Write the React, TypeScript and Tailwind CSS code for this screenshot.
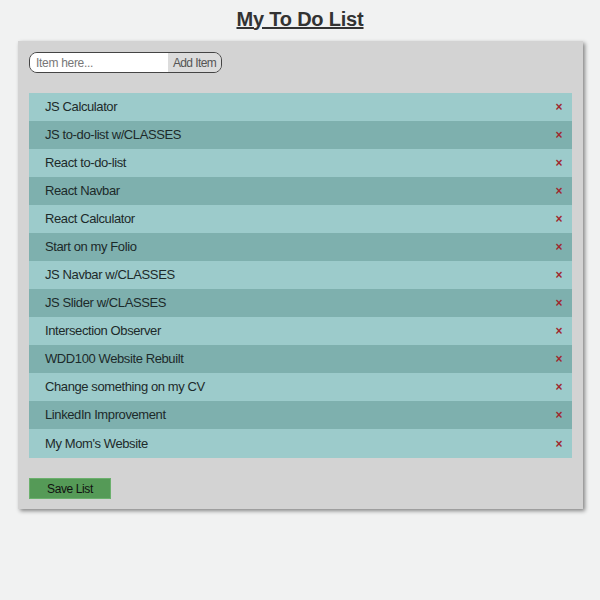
import React from "react";

const items = [
  "JS Calculator",
  "JS to-do-list w/CLASSES",
  "React to-do-list",
  "React Navbar",
  "React Calculator",
  "Start on my Folio",
  "JS Navbar w/CLASSES",
  "JS Slider w/CLASSES",
  "Intersection Observer",
  "WDD100 Website Rebuilt",
  "Change something on my CV",
  "LinkedIn Improvement",
  "My Mom's Website",
];

export default function App() {
  return (
    <div
      className="min-h-[600px] w-[600px] bg-[#f1f2f2] text-[#222]"
      style={{ fontFamily: '"Liberation Sans", Arial, sans-serif' }}
    >
      <div className="h-[41px] flex items-center justify-center">
        <h1 className="text-[20px] tracking-[-0.2px] font-bold underline text-[#333] leading-[26px] -mt-[4px]">
          My To Do List
        </h1>
      </div>
      <div className="ml-[18px] w-[565px] bg-[#d3d3d3] shadow-[2px_2px_4px_rgba(0,0,0,0.45)] px-[11px] pt-[11px] pb-[10px] flex flex-col">
        <div className="flex w-[193px] h-[21px] border border-[#444] rounded-l-[8px] rounded-r-[8px] overflow-hidden">
          <div className="flex-1 bg-white flex items-center pl-[6px] text-[12px] tracking-[-0.3px] text-[#777]">
            Item here...
          </div>
          <div className="w-[53px] bg-[#dcdcdc] flex items-center justify-center text-[12px] tracking-[-0.6px] text-[#555]">
            Add Item
          </div>
        </div>
        <div className="mt-[20px] flex flex-col">
          {items.map((t, i) => (
            <div
              key={t}
              className={`${i === 12 ? "h-[29px]" : "h-[28px]"} flex items-center justify-between pl-[16px] pr-[10px] text-[13px] tracking-[-0.4px] text-[#1c2a2a] ${
                i % 2 === 0 ? "bg-[#9ccbcb]" : "bg-[#7eb0ae]"
              }`}
            >
              <span>{t}</span>
              <span className="text-[12px] text-[#a0282e] font-bold leading-none">×</span>
            </div>
          ))}
        </div>
        <div className="mt-[20px]">
          <div className="w-[82px] h-[21px] bg-[#559a57] border border-[#6bb06d] flex items-center justify-center text-[12px] tracking-[-0.4px] text-[#111]">
            Save List
          </div>
        </div>
      </div>
    </div>
  );
}
